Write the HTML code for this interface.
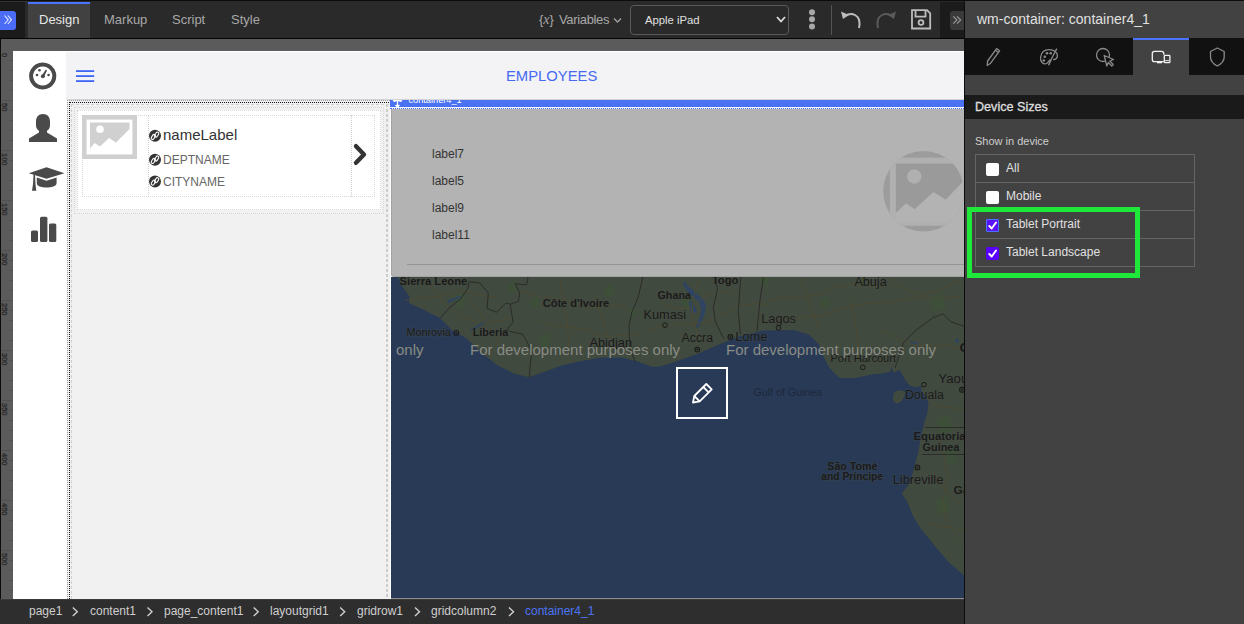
<!DOCTYPE html>
<html><head><meta charset="utf-8">
<style>
*{box-sizing:border-box;margin:0;padding:0}
html,body{width:1244px;height:624px;overflow:hidden;background:#2a2a2a;font-family:"Liberation Sans",sans-serif}
.a{position:absolute}
.t{position:absolute;white-space:nowrap;line-height:1}
</style></head><body>
<!-- ============ TOOLBAR ============ -->
<div class="a" style="left:0;top:0;width:1244px;height:1px;background:#0c0c0c"></div>
<div class="a" style="left:0;top:1px;width:28px;height:1px;background:#333"></div>
<div class="a" style="left:0;top:2px;width:25px;height:36px;background:#1b1b1b"></div>
<div class="a" style="left:0;top:11px;width:16px;height:19px;background:#4a6cf7;border-radius:0 3px 3px 0"></div>
<div class="a" style="left:28px;top:2px;width:62px;height:36px;background:#414141;border-top:2px solid #4a74ff"></div>
<div class="t" style="left:39px;top:13px;font-size:13px;color:#e6e6e6">Design</div>
<div class="t" style="left:104px;top:13px;font-size:13px;color:#a8a8a8">Markup</div>
<div class="t" style="left:172px;top:13px;font-size:13px;color:#a8a8a8">Script</div>
<div class="t" style="left:231px;top:13px;font-size:13px;color:#a8a8a8">Style</div>


<div class="t" style="left:539px;top:13px;font-size:13px;color:#a8a8a8">{<span style="font-family:'Liberation Serif',serif;font-style:italic;font-size:14px">x</span>}</div>
<div class="t" style="left:559px;top:13px;font-size:13px;letter-spacing:-0.35px;color:#a8a8a8">Variables</div>
<div class="a" style="left:630px;top:5px;width:159px;height:30px;border:1px solid #5a5a5a;border-radius:4px"></div>
<div class="t" style="left:645px;top:14.5px;font-size:11.3px;color:#e0e0e0">Apple iPad</div>

<div class="a" style="left:831px;top:5px;width:1px;height:30px;background:#555"></div>
<div class="a" style="left:940px;top:2px;width:25px;height:36px;background:#1b1b1b"></div>
<div class="a" style="left:950px;top:11px;width:15px;height:19px;background:#3a3a3a;border-radius:3px 0 0 3px"></div>
<div class="a" style="left:0;top:38px;width:965px;height:1px;background:#050505"></div>
<div class="a" style="left:0;top:39px;width:964px;height:1px;background:#606060"></div>
<svg class="a" style="left:0;top:0" width="965" height="37" viewBox="0 0 965 37">
 <g fill="none" stroke="#dfe6ff" stroke-width="1.1">
  <path d="M4.5 15.5 L8.2 19.8 L4.5 24"/><path d="M7.8 15.5 L11.5 19.8 L7.8 24"/>
 </g>
 <g fill="none" stroke="#a0a0a0" stroke-width="1.4">
  <path d="M614 18.5 L617.5 22 L621 18.5"/>
  <path d="M777 17 L781 21.5 L785 17" stroke="#dcdcdc" stroke-width="1.8"/>
 </g>
 <g fill="#a8a8a8"><circle cx="812" cy="12.2" r="3"/><circle cx="812" cy="19.3" r="3"/><circle cx="812" cy="26.5" r="3"/></g>
 <g fill="none" stroke="#bdbdbd" stroke-width="2">
  <path d="M845 16 C851 12, 862 14, 859 28"/>
 </g>
 <path d="M841 11.5 L843 19 L849 15 Z" fill="#bdbdbd"/>
 <g fill="none" stroke="#5a5a5a" stroke-width="2">
  <path d="M892 16 C886 12, 875 14, 878 28"/>
 </g>
 <path d="M896 11.5 L894 19 L888 15 Z" fill="#5a5a5a"/>
 <g fill="none" stroke="#bdbdbd" stroke-width="1.8">
  <path d="M912 10.2 H927 L930.2 13.4 V28.5 H912 Z"/>
  <path d="M915.5 10.2 V16.6 H925.5 V10.2"/>
  <circle cx="921" cy="22.5" r="2.4"/>
 </g>
 <g fill="none" stroke="#9a9a9a" stroke-width="1.1">
  <path d="M953.3 16.3 L957 20 L953.3 23.7"/><path d="M957 16.3 L960.7 20 L957 23.7"/>
 </g>
</svg>

<!-- ============ CANVAS ============ -->
<div class="a" style="left:0;top:39px;width:964px;height:560px;background:#5b5b5b"></div>
<div class="a" style="left:0;top:39px;width:1px;height:560px;background:#0c0c0c"></div>
<div class="a" style="left:13px;top:51px;width:951px;height:548px;background:#fff"></div>
<svg class="a" style="left:0;top:39px" width="14" height="560" viewBox="0 39 14 560"><g fill="#505050"><rect x="9" y="60" width="4" height="1"/><rect x="9" y="70" width="4" height="1"/><rect x="9" y="80" width="4" height="1"/><rect x="9" y="90" width="4" height="1"/><rect x="2" y="100" width="11" height="1"/><rect x="9" y="110" width="4" height="1"/><rect x="9" y="120" width="4" height="1"/><rect x="9" y="130" width="4" height="1"/><rect x="9" y="140" width="4" height="1"/><rect x="2" y="150" width="11" height="1"/><rect x="9" y="160" width="4" height="1"/><rect x="9" y="170" width="4" height="1"/><rect x="9" y="180" width="4" height="1"/><rect x="9" y="190" width="4" height="1"/><rect x="2" y="200" width="11" height="1"/><rect x="9" y="210" width="4" height="1"/><rect x="9" y="220" width="4" height="1"/><rect x="9" y="230" width="4" height="1"/><rect x="9" y="240" width="4" height="1"/><rect x="2" y="250" width="11" height="1"/><rect x="9" y="260" width="4" height="1"/><rect x="9" y="270" width="4" height="1"/><rect x="9" y="280" width="4" height="1"/><rect x="9" y="290" width="4" height="1"/><rect x="2" y="300" width="11" height="1"/><rect x="9" y="310" width="4" height="1"/><rect x="9" y="320" width="4" height="1"/><rect x="9" y="330" width="4" height="1"/><rect x="9" y="340" width="4" height="1"/><rect x="2" y="350" width="11" height="1"/><rect x="9" y="360" width="4" height="1"/><rect x="9" y="370" width="4" height="1"/><rect x="9" y="380" width="4" height="1"/><rect x="9" y="390" width="4" height="1"/><rect x="2" y="400" width="11" height="1"/><rect x="9" y="410" width="4" height="1"/><rect x="9" y="420" width="4" height="1"/><rect x="9" y="430" width="4" height="1"/><rect x="9" y="440" width="4" height="1"/><rect x="2" y="450" width="11" height="1"/><rect x="9" y="460" width="4" height="1"/><rect x="9" y="470" width="4" height="1"/><rect x="9" y="480" width="4" height="1"/><rect x="9" y="490" width="4" height="1"/><rect x="2" y="500" width="11" height="1"/><rect x="9" y="510" width="4" height="1"/><rect x="9" y="520" width="4" height="1"/><rect x="9" y="530" width="4" height="1"/><rect x="9" y="540" width="4" height="1"/><rect x="2" y="550" width="11" height="1"/><rect x="9" y="560" width="4" height="1"/><rect x="9" y="570" width="4" height="1"/><rect x="9" y="580" width="4" height="1"/><rect x="9" y="590" width="4" height="1"/></g><g fill="#262626" stroke="#262626" stroke-width="0.25" font-size="7.5" font-family="Liberation Sans"><text transform="translate(2.2,53) rotate(90)">0</text><text transform="translate(2.2,103) rotate(90)">50</text><text transform="translate(2.2,153) rotate(90)">100</text><text transform="translate(2.2,203) rotate(90)">150</text><text transform="translate(2.2,253) rotate(90)">200</text><text transform="translate(2.2,303) rotate(90)">250</text><text transform="translate(2.2,353) rotate(90)">300</text><text transform="translate(2.2,403) rotate(90)">350</text><text transform="translate(2.2,453) rotate(90)">400</text><text transform="translate(2.2,503) rotate(90)">450</text><text transform="translate(2.2,553) rotate(90)">500</text></g></svg>
<svg class="a" style="left:13px;top:51px" width="54" height="200" viewBox="13 51 54 200">
 <g fill="#4a4a4a">
  <path d="M42.7 62.4 A13.6 13.6 0 1 1 42.69 62.4 Z M42.7 66.4 A9.6 9.6 0 1 0 42.71 66.4 Z" fill-rule="evenodd"/>
  <circle cx="39.5" cy="70.2" r="1.3"/><circle cx="37" cy="75" r="1.3"/><circle cx="48.6" cy="75" r="1.3"/>
  <circle cx="42.9" cy="76.3" r="2"/>
  <path d="M41.9 75.6 L45.8 69.6 L47 70.4 L43.9 77 Z"/>
  <path d="M43 114 C38.5 114 36 117 36 121.5 V125.5 C36 128 37.5 130 39 130.8 V132.5 L29 138.5 V142 H57 V138.5 L47 132.5 V130.8 C48.5 130 50 128 50 125.5 V121.5 C50 117 47.5 114 43 114 Z"/>
  <path d="M46.5 167.2 L64.5 173.3 L46.5 178.8 L28.8 173.3 Z"/>
  <path d="M36.8 177.5 L46.5 180.8 L56.6 177.5 V183 C56.6 186.5 51 187.5 46.6 187.5 C42 187.5 36.8 186.5 36.8 183 Z"/>
  <path d="M33.5 174.5 L35 174.8 L35.5 184 L36.3 190.8 H32 L33 184 Z"/>
  <rect x="31" y="230.5" width="7" height="11.5" rx="1.5"/>
  <rect x="40" y="216.7" width="7.4" height="25.3" rx="1.5"/>
  <rect x="49" y="223.6" width="7.3" height="18.4" rx="1.5"/>
 </g>
</svg>
<div class="a" style="left:66px;top:52px;width:898px;height:48px;background:#f3f3f6;border-bottom:1px solid #d2d2d6;border-bottom-left-radius:3px"></div>
<div class="t" style="left:506px;top:68.5px;font-size:14.8px;color:#4569f0">EMPLOYEES</div>
<svg class="a" style="left:76px;top:70px" width="19" height="12" viewBox="0 0 19 12"><g fill="#3d66f5"><rect x="0" y="0.2" width="18.2" height="1.8"/><rect x="0" y="5.2" width="18.2" height="1.8"/><rect x="0" y="10.2" width="18.2" height="1.8"/></g></svg>
<div class="a" style="left:67px;top:100px;width:323px;height:499px;background:#f1f1f1"></div>
<div class="a" style="left:67px;top:100px;width:323px;height:499px;border-top:1px dotted #9a9a9a;border-left:1px dotted #9a9a9a"></div>
<div class="a" style="left:69px;top:102px;width:320px;height:497px;border-top:1px dotted #111;border-left:1px dotted #111"></div>
<div class="a" style="left:71px;top:104px;width:318px;height:495px;border-top:1px dashed #cfcfcf;border-left:1px dashed #cfcfcf"></div>
<div class="a" style="left:386px;top:104px;width:2px;height:495px;background:repeating-linear-gradient(to bottom,#cdcdcd 0,#cdcdcd 3px,transparent 3px,transparent 5px)"></div>
<div class="a" style="left:74px;top:107px;width:310px;height:107px;border:1px dotted #d6d6d6"></div>
<div class="a" style="left:77px;top:110px;width:304px;height:100px;background:#fff;border:1px dotted #dadada"></div>
<div class="a" style="left:82px;top:115px;width:293px;height:82px;border:1px dotted #d8d8d8"></div>
<div class="a" style="left:148px;top:115px;width:1px;height:82px;border-left:1px dotted #d0d0d0"></div>
<div class="a" style="left:351px;top:115px;width:1px;height:82px;border-left:1px dotted #d0d0d0"></div>
<svg class="a" style="left:82px;top:115px" width="56" height="45" viewBox="82 115 56 45">
 <rect x="84.3" y="117.3" width="50.4" height="39.4" fill="none" stroke="#d0d0d0" stroke-width="4.6"/>
 <path d="M90 122.5 H129.5 V129 L116 142.5 L109 138 L100 146.5 L94.5 143 L90 148.5 Z" fill="#d0d0d0"/>
 <circle cx="100" cy="129.3" r="3.8" fill="#fff"/>
</svg>
<svg class="a" style="left:148px;top:128px" width="14" height="60" viewBox="148 128 14 60">
 <g fill="#333"><circle cx="155" cy="135.8" r="6"/><circle cx="155" cy="159.7" r="6"/><circle cx="155" cy="181.4" r="6"/></g>
 <g fill="none" stroke="#fff" stroke-width="1.1"><g transform="rotate(-58 155 135.8)"><rect x="150.4" y="133.60000000000002" width="5.4" height="2.8" rx="1.4"/><rect x="154.2" y="135.20000000000002" width="5.4" height="2.8" rx="1.4"/></g><g transform="rotate(-58 155 159.7)"><rect x="150.4" y="157.5" width="5.4" height="2.8" rx="1.4"/><rect x="154.2" y="159.1" width="5.4" height="2.8" rx="1.4"/></g><g transform="rotate(-58 155 181.4)"><rect x="150.4" y="179.20000000000002" width="5.4" height="2.8" rx="1.4"/><rect x="154.2" y="180.8" width="5.4" height="2.8" rx="1.4"/></g></g>
</svg>
<div class="t" style="left:163px;top:127px;font-size:15px;color:#333">nameLabel</div>
<div class="t" style="left:163px;top:154px;font-size:12px;color:#666">DEPTNAME</div>
<div class="t" style="left:163px;top:176px;font-size:12px;color:#666">CITYNAME</div>
<svg class="a" style="left:350px;top:140px" width="22" height="30" viewBox="350 140 22 30"><path d="M356 146.2 L364 154.5 L356 162.8" fill="none" stroke="#333" stroke-width="4.4" stroke-linecap="round" stroke-linejoin="round"/></svg>

<!-- container4_1 -->
<div class="a" style="left:390px;top:100px;width:574px;height:7px;background:#4a72f2"></div>
<div class="a" style="left:390px;top:107px;width:574px;height:2px;background:#f4f6ff;border-bottom:1px dotted #4a72f2"></div>
<div class="a" style="left:391px;top:109px;width:573px;height:168px;background:#b3b3b3;border-left:1px solid #a2a2a2;border-bottom:1px solid #a2a2a2;border-bottom-left-radius:3px"></div>
<div class="t" style="left:432px;top:148px;font-size:12px;color:#333">label7</div>
<div class="t" style="left:432px;top:175px;font-size:12px;color:#333">label5</div>
<div class="t" style="left:432px;top:202px;font-size:12px;color:#333">label9</div>
<div class="t" style="left:432px;top:229px;font-size:12px;color:#333">label11</div>
<div class="a" style="left:407px;top:264px;width:557px;height:1px;background:#959595"></div>
<div class="a" style="left:390px;top:109px;width:1px;height:167px;border-left:1px dotted #fff"></div>
<div class="a" style="left:390px;top:100px;width:100px;height:7px;overflow:hidden"><div class="t" style="left:18.5px;top:-4.2px;font-size:9.2px;color:#fff">container4_1</div></div>
<svg class="a" style="left:392px;top:100px" width="12" height="8" viewBox="392 100 12 8"><path d="M393 100.5 H402 M397.5 100.5 V107 M395.5 105 L397.5 107 L399.5 105" stroke="#fff" stroke-width="1.3" fill="none"/><path d="M393 100 L394.5 102 L396 100 M399 100 L400.5 102 L402 100" fill="#fff" stroke="#fff" stroke-width="0.8"/></svg>
<svg class="a" style="left:880px;top:148px" width="84" height="88" viewBox="880 148 84 88">
 <defs><clipPath id="cc"><circle cx="923.5" cy="191.3" r="40.3"/></clipPath></defs>
 <g clip-path="url(#cc)">
  <rect x="880" y="148" width="84" height="88" fill="#9c9c9c"/>
  <rect x="889.8" y="157.7" width="90" height="68.1" fill="#b0b0b0"/>
  <rect x="895.9" y="163.5" width="80" height="58" fill="#b3b3b3"/>
  <path d="M895.9 163.5 H964 V180.4 L945.7 199.8 L933.4 191.9 L914.6 209.2 L906 203.4 L895.9 212.8 Z" fill="#9a9a9a"/>
  <circle cx="914.3" cy="176.5" r="7.2" fill="#b0b0b0"/>
 </g>
</svg>
<svg class="a" style="left:391px;top:277px" width="573" height="321" viewBox="391 277 573 321">
 <rect x="391" y="276" width="573" height="322" fill="#283a56"/>
 <path fill="#414a3e" d="M398.3 276 L398.3 277.3 L402.5 286.7 L409.8 297 L408.75 303.3 L421 308.5 L440 318 L452.5 330.4 L467 338.75 L481.7 353.3 L498.3 365.8 L515 374 L529.6 377.3 L544 372 L560.8 365.8 L577.5 361.7 L590 359.6 L600.8 357.5 L621.7 357.5 L638.3 361.7 L652.9 366.9 L660 366.4 L672.8 362.6 L698.5 353.6 L719 344.6 L737 337 L762.6 330.5 L770 330.4 L793.3 330 L808.7 334.4 L819 344.6 L824 357.4 L829.2 367.7 L839.5 378 L854.9 378 L871.2 374.6 L882.4 373.5 L890.3 371.8 L891.4 367.3 L893.7 373 L899.3 369.6 L902.6 375.2 L906 380.8 L909.4 385.3 L916.1 387.5 L922.8 385.3 L920.6 388.7 L926.2 397.6 L928.4 403.2 L927.3 413.3 L925 420 L920.9 436.4 L918.2 452.7 L914.1 467.7 L910 482.7 L901.8 493.6 L907.3 501.8 L912.7 515.5 L920.9 529 L934.5 545.5 L948.2 561.8 L964 575.4 L964 276 Z"/>
 <path fill="#414a3e" d="M894 393 C896 390 902 390 905 392 C905 397 902 402 897 403.5 C893 403 892 398 894 393 Z"/>
 <g fill="#3d5238" opacity="0.7"><path d="M453 298 L462 292 L466 304 L458 310 Z"/><path d="M508 285 L514 281 L518 290 L510 293 Z"/><path d="M538 337 L548 333 L552 345 L542 348 Z"/><path d="M530 301 L538 297 L540 306 L532 308 Z"/><path d="M603 288 L612 284 L615 294 L606 297 Z"/><path d="M628 310 L634 306 L637 316 L630 318 Z"/><path d="M680 300 L690 296 L694 306 L684 310 Z"/><path d="M760 276 L770 276 L768 286 L760 284 Z"/><path d="M820 300 L828 296 L830 306 L822 308 Z"/><path d="M858 276 L866 276 L864 284 L857 282 Z"/><path d="M930 300 L942 292 L946 308 L934 312 Z"/><path d="M936 420 L950 414 L952 430 L940 434 Z"/><path d="M935 500 L948 496 L950 512 L938 514 Z"/><path d="M945 450 L955 446 L958 462 L948 464 Z"/></g>
 <g fill="#2c4466" opacity="0.9"><path d="M447 301 L460 296 L461 297.5 L448 303 Z"/><path d="M470 330 L486 320 L487 321.5 L471 331.5 Z"/><path d="M684 281 L688 286 L693 290 L698 295 L703 299 L706 305 L705 313 L702 321 L698 328 L696 326.5 L699.5 318 L701.5 310 L699.5 303 L694 298 L688 292 L683 285 Z"/><path d="M689 300 L694 304 L697 312 L693 313 L689 306 Z"/><path d="M910 341 L918 343 L918 345 L910 343 Z"/><path d="M955 340 L958 338 L959 342 L956 343 Z"/></g>
 <g fill="none" stroke="#4d4b33" stroke-width="0.9"><path d="M405 300 C420 296 440 300 455 292 C470 286 480 300 500 296"/><path d="M430 285 C440 300 450 312 470 320 C480 324 495 322 510 318"/><path d="M470 300 C480 310 490 330 500 345"/><path d="M520 290 C540 300 560 296 580 305 C600 312 615 300 630 310"/><path d="M540 320 C560 330 580 325 600 335 C615 340 625 330 640 335"/><path d="M560 280 C562 300 570 320 568 350"/><path d="M590 290 C600 300 600 320 610 340"/><path d="M650 330 C670 320 690 330 710 320 C730 310 745 300 770 305"/><path d="M660 300 C670 310 690 312 700 300 C710 290 720 295 735 290"/><path d="M700 340 C690 320 690 300 700 280"/><path d="M770 300 C790 296 810 300 830 290 C850 280 870 290 890 285"/><path d="M780 320 C800 315 820 320 840 310 C860 300 880 305 900 300 C920 296 940 300 960 296"/><path d="M800 276 C805 290 810 310 820 330"/><path d="M850 300 C855 320 860 340 858 360"/><path d="M880 330 C900 340 920 350 940 345 C950 342 955 350 964 348"/><path d="M890 276 C900 290 920 300 940 290 C950 286 955 280 964 282"/><path d="M930 400 C940 410 950 405 964 410"/><path d="M930 470 C940 480 950 500 964 505"/><path d="M925 520 C935 530 950 525 964 530"/><path d="M940 440 C945 460 950 470 945 490 C940 510 950 530 964 545"/></g>
 <g fill="none" stroke="#2b2b2b" stroke-width="1"><path d="M440.6 317.8 L449 308 L461 298.7 L468 287.8 L469 281.6 L480 283 L488.4 293.2 L487 308.3 L496.6 312.4 L506 302.8 L510.3 304.2 L513 322 L507.5 328.8 L510 331.5 L522.5 334.2 L526.6 341 L532 352 L530 366 L529.6 377.3"/><path d="M510.3 304.2 L518.4 301.4 L519.8 293.2 L515 283.7 L526.6 285 L528 278.2 L527 276"/><path d="M635.2 361.7 L630 349 L629 326 L632 311.7 L638.3 297 L642.5 278.3 L643 276"/><path d="M723.75 338.75 L715.4 322 L713.3 307.5 L717.5 288.75 L715.4 278 L716 276"/><path d="M740.4 334.6 L738.3 311.7 L740.4 282.5 L741 276"/><path d="M757 331.5 L760 300 L763.3 278.3 L763 276"/><path d="M895 368 L903.3 343 L915.8 330.4 L932.5 318 L943 313.75 L951 322 L963.75 326"/><path d="M925 427.5 L964 427.5"/><path d="M922 454.5 L964 454.5"/></g>
 <g font-family="Liberation Sans" fill="#1a1a1a" stroke="#4a4f48" stroke-width="1.6" stroke-opacity="0.35" paint-order="stroke"><text x="399.6" y="284.8" font-size="11" font-weight="bold" textLength="67.6" lengthAdjust="spacingAndGlyphs">Sierra Leone</text><text x="406.4" y="336.3" font-size="11" textLength="44.4" lengthAdjust="spacingAndGlyphs">Monrovia</text><text x="472.7" y="336.3" font-size="11" font-weight="bold" textLength="35.5" lengthAdjust="spacingAndGlyphs">Liberia</text><text x="542.7" y="306.5" font-size="11" font-weight="bold" textLength="66.5" lengthAdjust="spacingAndGlyphs">Côte d'Ivoire</text><text x="657.5" y="298.5" font-size="11" font-weight="bold" textLength="33.5" lengthAdjust="spacingAndGlyphs">Ghana</text><text x="711.9" y="284.2" font-size="11" font-weight="bold" textLength="26.4" lengthAdjust="spacingAndGlyphs">Togo</text><text x="643.5" y="319" font-size="12.5" textLength="42.5" lengthAdjust="spacingAndGlyphs">Kumasi</text><text x="589.4" y="346.7" font-size="12.5" textLength="42.6" lengthAdjust="spacingAndGlyphs">Abidjan</text><text x="681.5" y="341.9" font-size="12.5" textLength="31.5" lengthAdjust="spacingAndGlyphs">Accra</text><text x="735.2" y="340.6" font-size="12.5" textLength="32.3" lengthAdjust="spacingAndGlyphs">Lome</text><text x="761.3" y="322.8" font-size="12.5" textLength="34.6" lengthAdjust="spacingAndGlyphs">Lagos</text><text x="854.4" y="285.6" font-size="12.5" textLength="32.3" lengthAdjust="spacingAndGlyphs">Abuja</text><text x="830.4" y="361.7" font-size="11.5" textLength="65.6" lengthAdjust="spacingAndGlyphs">Port Harcourt</text><text x="938.3" y="382.5" font-size="12.5" textLength="30" lengthAdjust="spacingAndGlyphs">Yaou</text><text x="904.9" y="399.3" font-size="12.5" textLength="39" lengthAdjust="spacingAndGlyphs">Douala</text><text x="913.6" y="440.3" font-size="11" font-weight="bold" textLength="52" lengthAdjust="spacingAndGlyphs">Equatoria</text><text x="922.6" y="450.8" font-size="11" font-weight="bold" textLength="36.8" lengthAdjust="spacingAndGlyphs">Guinea</text><text x="827.3" y="470.3" font-size="10.5" font-weight="bold" textLength="50" lengthAdjust="spacingAndGlyphs">São Tomé</text><text x="821.3" y="480.3" font-size="10.5" font-weight="bold" textLength="61.7" lengthAdjust="spacingAndGlyphs">and Príncipe</text><text x="892.7" y="483.5" font-size="12.5" textLength="50.6" lengthAdjust="spacingAndGlyphs">Libreville</text><text x="953.6" y="494.4" font-size="11" font-weight="bold" textLength="16" lengthAdjust="spacingAndGlyphs">Ga</text><text x="959.6" y="352.3" font-size="12" font-weight="bold" textLength="10" lengthAdjust="spacingAndGlyphs">C</text></g>
 <circle cx="456.3" cy="332.9" r="2.4" fill="none" stroke="#1a1a1a" stroke-width="1.1"/><circle cx="456.3" cy="332.9" r="1" fill="#1a1a1a"/><circle cx="697.3" cy="349.6" r="2.4" fill="none" stroke="#1a1a1a" stroke-width="1.1"/><circle cx="697.3" cy="349.6" r="1" fill="#1a1a1a"/><circle cx="730.4" cy="337" r="2.4" fill="none" stroke="#1a1a1a" stroke-width="1.1"/><circle cx="730.4" cy="337" r="1" fill="#1a1a1a"/><circle cx="962" cy="389.8" r="2.4" fill="none" stroke="#1a1a1a" stroke-width="1.1"/><circle cx="962" cy="389.8" r="1" fill="#1a1a1a"/><circle cx="917.4" cy="467.4" r="2.4" fill="none" stroke="#1a1a1a" stroke-width="1.1"/><circle cx="917.4" cy="467.4" r="1" fill="#1a1a1a"/><circle cx="665" cy="325.2" r="2.3" fill="none" stroke="#1a1a1a" stroke-width="1"/><circle cx="778.5" cy="328" r="2.3" fill="none" stroke="#1a1a1a" stroke-width="1"/><circle cx="862.7" cy="367.3" r="2.3" fill="none" stroke="#1a1a1a" stroke-width="1"/><circle cx="924" cy="384.7" r="2.3" fill="none" stroke="#1a1a1a" stroke-width="1"/>
 <text x="753.6" y="395.9" font-family="Liberation Sans" font-size="11" fill="#1d283d" textLength="68.4" lengthAdjust="spacingAndGlyphs">Gulf of Guinea</text>
 <g font-family="Liberation Sans" font-size="15" fill="#8a8c85">
  <text x="396" y="355">only</text>
  <text x="470" y="355">For development purposes only</text>
  <text x="726" y="355">For development purposes only</text>
 </g>
 <rect x="677" y="368" width="50" height="50" fill="none" stroke="#fff" stroke-width="2"/>
 <g fill="none" stroke="#fff" stroke-width="1.8" stroke-linejoin="round">
  <path d="M693 402.5 L694.3 396 L706.3 384 L711.7 389.4 L699.7 401.4 Z"/>
  <path d="M694.3 396 L699.7 401.4"/><path d="M703.3 387 L708.7 392.4"/>
 </g>
</svg>
<div class="a" style="left:391px;top:598px;width:573px;height:1px;background:#8c8c8c"></div>

<!-- ============ BREADCRUMB ============ -->
<div class="a" style="left:0;top:599px;width:965px;height:25px;background:#2e2e2e;border-top:1px solid #3a3a3a"></div>
<div class="t" style="left:29px;top:605px;font-size:12px;color:#cfcfcf">page1</div>
<div class="t" style="left:90px;top:605px;font-size:12px;color:#cfcfcf">content1</div>
<div class="t" style="left:164px;top:605px;font-size:12px;color:#cfcfcf">page_content1</div>
<div class="t" style="left:270px;top:605px;font-size:12px;color:#cfcfcf">layoutgrid1</div>
<div class="t" style="left:357px;top:605px;font-size:12px;color:#cfcfcf">gridrow1</div>
<div class="t" style="left:431px;top:605px;font-size:12px;color:#cfcfcf">gridcolumn2</div>
<div class="t" style="left:525px;top:605px;font-size:12px;color:#4a74f5">container4_1</div>
<svg class="a" style="left:0;top:599px" width="965" height="25" viewBox="0 599 965 25"><g fill="none" stroke="#cfcfcf" stroke-width="1.4"><path d="M72.8 607.5 L77.3 611.8 L72.8 616"/><path d="M147.5 607.5 L152 611.8 L147.5 616"/><path d="M253.7 607.5 L258.2 611.8 L253.7 616"/><path d="M340.2 607.5 L344.7 611.8 L340.2 616"/><path d="M415.0 607.5 L419.5 611.8 L415.0 616"/><path d="M509.0 607.5 L513.5 611.8 L509.0 616"/></g></svg>

<!-- ============ RIGHT PANEL ============ -->
<div class="a" style="left:964px;top:0;width:1px;height:624px;background:#0c0c0c"></div>
<div class="a" style="left:965px;top:1px;width:279px;height:623px;background:#424242"></div>
<div class="t" style="left:977px;top:12px;font-size:14px;color:#e0e0e0">wm-container: container4_1</div>
<div class="a" style="left:965px;top:38px;width:279px;height:37px;background:#111"></div>
<div class="a" style="left:1133px;top:38px;width:56px;height:37px;background:#424242;border-top:2px solid #4a74ff"></div>
<div class="a" style="left:965px;top:95px;width:279px;height:24px;background:#1a1a1a"></div>
<div class="t" style="left:975px;top:100.5px;font-size:12.6px;-webkit-text-stroke:0.35px #dcdcdc;color:#dcdcdc">Device Sizes</div>
<svg class="a" style="left:965px;top:38px" width="279" height="37" viewBox="965 38 279 37">
 <g fill="none" stroke="#8a8a8a" stroke-width="1.3" stroke-linejoin="round">
  <path d="M987.2 65.5 L987.6 61 L996.6 48.6 L999.6 50.8 L990.6 63.2 Z"/>
  <path d="M995.4 50.3 L998.4 52.5"/>
  <path d="M1050.6 59.6 C1049 60.3 1048.3 62.3 1047 63.3 C1043.5 65.2 1040 62 1040.6 57 C1041.3 52 1045 49.6 1049.2 49.6 C1053.8 49.6 1057.4 52.2 1057.4 55.5 C1057.4 58.5 1055.2 59.8 1053 59.4"/>
  <path d="M1056.8 48.6 L1050.2 61.2"/>
  <circle cx="1103" cy="55" r="6.5"/>
  <path d="M1104.2 55.5 L1113.5 59.5 L1109.8 61 L1113.2 64.5 L1111.8 66 L1108.3 62.5 L1106.8 66 Z" fill="#111"/>
  <path d="M1210.5 51.5 L1217.3 48 L1224.2 51.5 V57 C1224.2 61 1221 64 1217.3 66 C1213.5 64 1210.5 61 1210.5 57 Z"/>
 </g>
 <g fill="#8a8a8a"><circle cx="1047" cy="53.2" r="1.3"/><circle cx="1050.7" cy="53.2" r="1.3"/><circle cx="1044.8" cy="56.8" r="1.3"/><circle cx="1043.8" cy="60.5" r="1.3"/><path d="M1050 59.8 L1051.6 60.6 L1049.2 65.6 L1047.9 65 Z"/></g>
 <g fill="none" stroke="#f2f2f2" stroke-width="1.3">
  <path d="M1163.8 54.8 V53.5 C1163.8 52 1163 51.3 1161.5 51.3 H1154.5 C1153 51.3 1152.3 52 1152.3 53.5 V59.5 C1152.3 61 1153 61.7 1154.5 61.7 H1163.8"/>
  <rect x="1164.3" y="55.3" width="5.6" height="7.4" rx="0.8"/>
 </g>
 <rect x="1157" y="62" width="5" height="1.3" fill="#f2f2f2"/>
 <rect x="1165" y="60" width="4.2" height="1.2" fill="#cfcfcf"/>
</svg>
<div class="t" style="left:975px;top:136px;font-size:11px;color:#cfcfcf">Show in device</div>
<div class="a" style="left:975px;top:154px;width:220px;height:113px;border:1px solid #656565"></div>
<div class="a" style="left:976px;top:182px;width:218px;height:1px;background:#656565"></div>
<div class="a" style="left:976px;top:210px;width:218px;height:1px;background:#656565"></div>
<div class="a" style="left:976px;top:238px;width:218px;height:1px;background:#656565"></div>
<div class="a" style="left:986px;top:163px;width:13px;height:13px;background:#fff;border-radius:2px"></div>
<div class="a" style="left:986px;top:191px;width:13px;height:13px;background:#fff;border-radius:2px"></div>
<div class="a" style="left:986px;top:219px;width:13px;height:13px;background:#5a12f5;border:1.5px solid #4d74ff;border-radius:1px"></div>
<div class="a" style="left:986px;top:247px;width:13px;height:13px;background:#5a00ff;border-radius:2px"></div>
<svg class="a" style="left:986px;top:219px" width="13" height="42" viewBox="986 219 13 42"><g fill="none" stroke="#fff" stroke-width="1.9" stroke-linecap="round" stroke-linejoin="round"><path d="M989.3 226 L991.7 228.5 L996 222.5"/><path d="M989.3 254 L991.7 256.5 L996 250.5"/></g></svg>
<div class="t" style="left:1006px;top:162px;font-size:12px;color:#e0e0e0">All</div>
<div class="t" style="left:1006px;top:190px;font-size:12px;color:#e0e0e0">Mobile</div>
<div class="t" style="left:1006px;top:218px;font-size:12px;color:#e0e0e0">Tablet Portrait</div>
<div class="t" style="left:1006px;top:246px;font-size:12px;color:#e0e0e0">Tablet Landscape</div>
<div class="a" style="left:967px;top:207px;width:173px;height:71px;border:5px solid #1ee83a"></div>

</body></html>
